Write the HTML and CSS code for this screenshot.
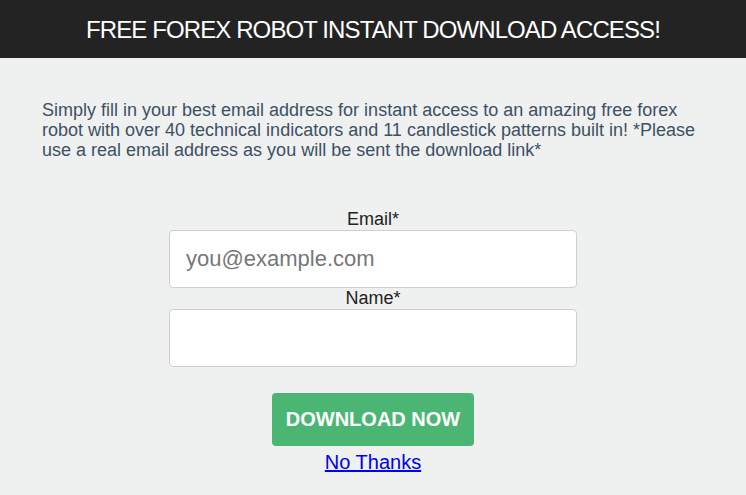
FILE: index.html
```html
<!DOCTYPE html>
<html>
<head>
<meta charset="utf-8">
<link rel="stylesheet" href="styles.css">
</head>
<body>
<header class="topbar">
  <h1 class="title">FREE FOREX ROBOT INSTANT DOWNLOAD ACCESS!</h1>
</header>
<main class="content">
  <p class="intro">Simply fill in your best email address for instant access to an amazing free forex robot with over 40 technical indicators and 11 candlestick patterns built in! *Please use a real email address as you will be sent the download link*</p>
  <form class="form">
    <label class="label" for="email">Email*</label>
    <input class="field" id="email" type="text" placeholder="you@example.com">
    <label class="label" for="name">Name*</label>
    <input class="field" id="name" type="text">
    <button class="btn" type="button">DOWNLOAD NOW</button>
    <a class="nothanks" href="#">No Thanks</a>
  </form>
</main>
</body>
</html>
```
FILE: styles.css
```css
html, body {
  margin: 0;
  padding: 0;
}
body {
  background: #eff0f0;
  font-family: "Liberation Sans", Arial, sans-serif;
  width: 746px;
  height: 495px;
  overflow: hidden;
}
.topbar {
  background: #232323;
  height: 58px;
  display: flex;
  align-items: center;
  justify-content: center;
}
.title {
  margin: 0;
  color: #fff;
  font-weight: normal;
  font-size: 24px;
  letter-spacing: -0.9px;
  padding-top: 1px;
}
.content {
  padding: 42px 42px 0 42px;
}
.intro {
  margin: 0;
  color: #3d5064;
  font-size: 18px;
  line-height: 20px;
}
.form {
  display: flex;
  flex-direction: column;
  align-items: center;
  margin-top: 49px;
}
.label {
  color: #222;
  font-size: 18px;
  line-height: 20px;
  margin-bottom: 1px;
}
.field {
  box-sizing: border-box;
  width: 408px;
  height: 58px;
  border: 1px solid #cfcfcf;
  border-radius: 4px;
  background: #fff;
  padding: 0 16px;
  font-family: "Liberation Sans", Arial, sans-serif;
  font-size: 22px;
  color: #333;
}
.field::placeholder {
  color: #777;
}
.btn {
  margin-top: 26px;
  width: 202px;
  height: 53px;
  background: #4bb673;
  border: none;
  border-radius: 4px;
  color: #fff;
  font-family: "Liberation Sans", Arial, sans-serif;
  font-weight: bold;
  font-size: 20px;
}
.nothanks {
  margin-top: 4px;
  color: #0000ee;
  font-size: 20px;
  line-height: 24px;
}
```
